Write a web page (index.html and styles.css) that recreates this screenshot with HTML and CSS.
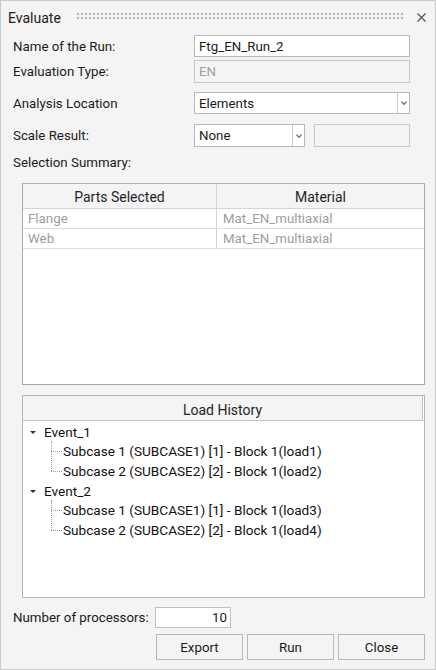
FILE: index.html
```html
<!DOCTYPE html>
<html>
<head>
<meta charset="utf-8">
<link rel="stylesheet" href="styles.css">
</head>
<body>
<div class="window">
  <div class="titlebar">
    <span class="title">Evaluate</span>
    <span class="grip"></span>
    <svg class="close" width="9" height="9" viewBox="0 0 9 9"><path d="M0.5 0.5L8.5 8.5M8.5 0.5L0.5 8.5" stroke="#555" stroke-width="1.2" fill="none"/></svg>
  </div>
  <div class="content">
    <div class="row r-name">
      <label class="lbl">Name of the Run:</label>
      <div class="field input">Ftg_EN_Run_2</div>
    </div>
    <div class="row r-type">
      <label class="lbl">Evaluation Type:</label>
      <div class="field input disabled">EN</div>
    </div>
    <div class="row r-loc">
      <label class="lbl">Analysis Location</label>
      <div class="field select wide">
        <span class="sel-text">Elements</span>
        <span class="sel-btn"><svg width="6" height="4" viewBox="0 0 6 4"><path d="M0.5 0.5L3 3.5L5.5 0.5" stroke="#7a7a7a" stroke-width="1.3" fill="none"/></svg></span>
      </div>
    </div>
    <div class="row r-scale">
      <label class="lbl">Scale Result:</label>
      <div class="field select narrow">
        <span class="sel-text">None</span>
        <span class="sel-btn"><svg width="6" height="4" viewBox="0 0 6 4"><path d="M0.5 0.5L3 3.5L5.5 0.5" stroke="#7a7a7a" stroke-width="1.3" fill="none"/></svg></span>
      </div>
      <div class="field input disabled small"></div>
    </div>
    <div class="section-label">Selection Summary:</div>
    <div class="parts">
      <div class="parts-head">
        <div class="ph c1">Parts Selected</div>
        <div class="ph c2">Material</div>
      </div>
      <div class="prow">
        <div class="pc c1">Flange</div>
        <div class="pc c2">Mat_EN_multiaxial</div>
      </div>
      <div class="prow">
        <div class="pc c1">Web</div>
        <div class="pc c2">Mat_EN_multiaxial</div>
      </div>
    </div>
    <div class="history">
      <div class="hist-head">Load History</div>
      <div class="tree">
        <div class="event">
          <div class="ev-row"><span class="tri"></span><span>Event_1</span></div>
          <div class="children">
            <div class="leaf"><span class="hline"></span><span>Subcase 1 (SUBCASE1) [1] - Block 1(load1)</span></div>
            <div class="leaf last"><span class="hline"></span><span>Subcase 2 (SUBCASE2) [2] - Block 1(load2)</span></div>
          </div>
        </div>
        <div class="event">
          <div class="ev-row"><span class="tri"></span><span>Event_2</span></div>
          <div class="children">
            <div class="leaf"><span class="hline"></span><span>Subcase 1 (SUBCASE1) [1] - Block 1(load3)</span></div>
            <div class="leaf last"><span class="hline"></span><span>Subcase 2 (SUBCASE2) [2] - Block 1(load4)</span></div>
          </div>
        </div>
      </div>
    </div>
    <div class="row r-proc">
      <label class="lbl proc-lbl">Number of processors:</label>
      <div class="field input num">10</div>
    </div>
    <div class="buttons">
      <button class="btn">Export</button>
      <button class="btn">Run</button>
      <button class="btn">Close</button>
    </div>
  </div>
</div>
</body>
</html>
```
FILE: styles.css
```css
html, body {
  margin: 0;
  padding: 0;
  background: #f4f4f4;
}
body {
  font-family: Roboto, "Noto Sans", "Liberation Sans", sans-serif;
  font-size: 13.3px;
  color: #1a1a1a;
}
.window {
  width: 436px;
  height: 670px;
  box-sizing: border-box;
  border: 1px solid #cacaca;
  background: #f4f4f4;
}
.titlebar {
  height: 31px;
  display: flex;
  align-items: center;
  padding: 2px 0 0 7px;
  box-sizing: border-box;
}
.title {
  font-size: 14px;
  color: #222;
}
.grip {
  flex: 1;
  height: 7px;
  margin: 0 14px 0 15px;
  background-image: radial-gradient(circle, #b4b4b4 0.9px, transparent 1.1px);
  background-size: 4px 4px;
  background-position: 0 -1px;
  position: relative;
  top: -1px;
}
.close {
  margin-right: 9px;
}
.content {
  padding: 0 11px 0 12px;
}
.row {
  display: flex;
  align-items: center;
}
.lbl {
  width: 181px;
  flex: none;
}
.field {
  box-sizing: border-box;
  border: 1px solid #b8b8b8;
  background: #fff;
  height: 22px;
  display: flex;
  align-items: center;
}
.input {
  width: 216px;
  padding-left: 4px;
}
.disabled {
  background: #f4f4f4;
  border-color: #c8c8c8;
  color: #a0a0a0;
  height: 23px;
}
.r-name { margin-top: 3px; }
.r-type { margin-top: 3px; }
.r-loc { margin-top: 9px; }
.r-scale { margin-top: 10px; }
.r-scale .field { height: 23px; }
.select .sel-text {
  flex: 1;
  padding-left: 4px;
}
.sel-btn {
  width: 11px;
  height: 100%;
  border-left: 1px solid #c8c8c8;
  display: flex;
  align-items: center;
  justify-content: center;
}
.wide { width: 216px; }
.narrow { width: 111px; }
.small {
  width: 96px;
  margin-left: 9px;
}
.section-label {
  margin-top: 7px;
  line-height: 18px;
}
.parts {
  margin: 11px 0 0 9px;
  width: 403px;
  height: 202px;
  box-sizing: border-box;
  border: 1px solid #a8a8a8;
  border-top-color: #b0b0b0;
  background: #fff;
}
.parts-head {
  display: flex;
  height: 24px;
  background: #f4f4f4;
  border-bottom: 1px solid #d4d4d4;
}
.ph {
  font-size: 14px;
  display: flex;
  align-items: center;
  justify-content: center;
  padding-top: 2px;
  color: #1f1f1f;
}
.c1 { width: 194px; box-sizing: border-box; border-right: 1px solid #d4d4d4; }
.c2 { flex: 1; }
.prow {
  display: flex;
  height: 19px;
  border-bottom: 1px solid #dedede;
}
.pc {
  color: #9d9d9d;
  display: flex;
  align-items: center;
}
.pc.c1 { padding-left: 5px; }
.pc.c2 { padding-left: 6px; }
.history {
  margin: 10px 0 0 9px;
  width: 403px;
  height: 203px;
  box-sizing: border-box;
  border: 1px solid #b4b4b4;
  background: #fff;
}
.hist-head {
  height: 25px;
  box-sizing: border-box;
  background: #f4f4f4;
  border-right: 1px solid #c4c4c4;
  border-bottom: 1px solid #c4c4c4;
  margin-right: 1px;
  font-size: 14px;
  display: flex;
  align-items: center;
  justify-content: center;
  padding-top: 3px;
  color: #1f1f1f;
}
.tree {
  padding-top: 1px;
  font-size: 13.6px;
}
.ev-row, .leaf {
  height: 20px;
  display: flex;
  align-items: center;
  color: #111;
}
.tri {
  width: 0;
  height: 0;
  border-left: 3px solid transparent;
  border-right: 3px solid transparent;
  border-top: 3px solid #333;
  margin: 0 8px 0 7px;
}
.children {
  margin-left: 28px;
  border-left: 1px dotted #9a9a9a;
  height: 30px;
  margin-bottom: 10px;
  position: relative;
}
.children .leaf {
  position: relative;
  left: -1px;
}
.leaf:first-child { margin-top: -1px; }
.hline {
  width: 11px;
  border-top: 1px dotted #9a9a9a;
  margin-right: 1px;
}
.r-proc { margin-top: 9px; }
.proc-lbl { width: 142px; }
.num {
  width: 76px;
  height: 21px;
  justify-content: flex-end;
  padding-right: 3px;
  border-color: #c0c0c0;
}
.buttons {
  display: flex;
  justify-content: flex-end;
  gap: 4px;
  margin-top: 6px;
  margin-right: -1px;
}
.btn {
  width: 87px;
  height: 26px;
  box-sizing: border-box;
  border: 1px solid #b8b8b8;
  background: #f4f4f4;
  font-family: inherit;
  font-size: 13.3px;
  color: #1a1a1a;
  padding: 0;
}
```
